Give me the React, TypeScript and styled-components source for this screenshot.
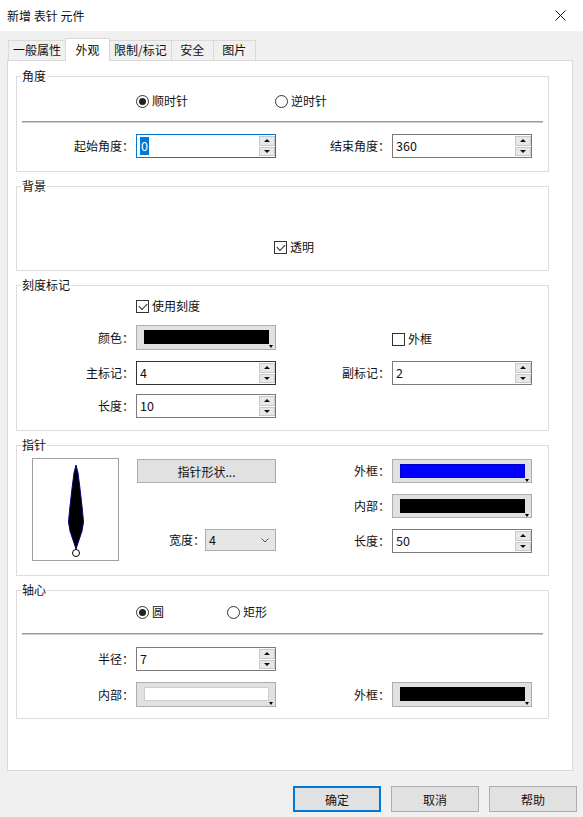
import styled, { createGlobalStyle } from 'styled-components';

const GlobalStyle = createGlobalStyle`
  html, body {
    margin: 0;
    padding: 0;
    background: #f0f0f0;
  }
  body {
    font-family: "Noto Sans CJK SC", "Microsoft YaHei", sans-serif;
    font-size: 12px;
    color: #111;
  }
  * {
    box-sizing: border-box;
  }
`;

const tabs = ['一般属性', '外观', '限制/标记', '安全', '图片'];

export default function App() {
  return (
    <Window>
      <GlobalStyle />
      <TitleBar>
        <Title>新增 表针 元件</Title>
        <CloseButton>
          <svg width="11" height="11" viewBox="0 0 11 11">
            <path d="M0.5 0.5 L10.5 10.5 M10.5 0.5 L0.5 10.5" stroke="#111" strokeWidth="1" />
          </svg>
        </CloseButton>
      </TitleBar>

      <Body>
        <TabStrip>
          {tabs.map((t, i) => (
            <Tab key={t} $active={i === 1}>
              {t}
            </Tab>
          ))}
        </TabStrip>

        <Panel>
          {/* 角度 */}
          <Group $h={104}>
            <Legend>角度</Legend>
            <GroupBody $pt={8}>
              <RadioRow>
                <RadioItem $w={139}>
                  <Radio $checked />
                  顺时针
                </RadioItem>
                <RadioItem>
                  <Radio />
                  逆时针
                </RadioItem>
              </RadioRow>
              <Etched $mt={11} />
              <FormRow $h={24} $mt={11}>
                <Label>起始角度：</Label>
                <SpinBox $tone="focus">
                  <SpinValue>
                    <Selected>0</Selected>
                  </SpinValue>
                  <Spinner />
                </SpinBox>
                <Label>结束角度：</Label>
                <SpinBox>
                  <SpinValue>360</SpinValue>
                  <Spinner />
                </SpinBox>
              </FormRow>
            </GroupBody>
          </Group>

          {/* 背景 */}
          <Group $h={93}>
            <Legend>背景</Legend>
            <GroupBody $pt={45}>
              <CheckRow $pl={257}>
                <CheckItem>
                  <CheckBox $checked />
                  透明
                </CheckItem>
              </CheckRow>
            </GroupBody>
          </Group>

          {/* 刻度标记 */}
          <Group $h={154}>
            <Legend>刻度标记</Legend>
            <GroupBody $pt={5}>
              <CheckRow $pl={119}>
                <CheckItem>
                  <CheckBox $checked />
                  使用刻度
                </CheckItem>
              </CheckRow>
              <FormRow $h={25} $mt={11}>
                <Label>颜色：</Label>
                <ColorButton color="#000" />
                <span />
                <CheckCell>
                  <CheckItem>
                    <CheckBox />
                    外框
                  </CheckItem>
                </CheckCell>
              </FormRow>
              <FormRow $h={24} $mt={11}>
                <Label>主标记：</Label>
                <SpinBox $tone="dark">
                  <SpinValue>4</SpinValue>
                  <Spinner />
                </SpinBox>
                <Label>副标记：</Label>
                <SpinBox>
                  <SpinValue>2</SpinValue>
                  <Spinner />
                </SpinBox>
              </FormRow>
              <FormRow $h={24} $mt={9}>
                <Label>长度：</Label>
                <SpinBox>
                  <SpinValue>10</SpinValue>
                  <Spinner />
                </SpinBox>
              </FormRow>
            </GroupBody>
          </Group>

          {/* 指针 */}
          <Group $h={139}>
            <Legend>指针</Legend>
            <GroupBody $pt={6}>
              <NeedleGrid>
                <Preview>
                  <svg width="85" height="101" viewBox="0 0 85 101">
                    <polygon
                      points="43,6 45,14 46.8,28 49.3,50 50.5,63 49,72 46,81 43,90 40,81 37,72 35.5,63 36.7,50 39.2,28 41,14"
                      fill="#000"
                      stroke="#000080"
                      strokeWidth="1"
                      strokeLinejoin="round"
                    />
                    <circle cx="43" cy="94" r="3.5" fill="#fff" stroke="#000" strokeWidth="1" />
                  </svg>
                </Preview>
                <PushButton $w={139}>指针形状...</PushButton>
                <Label>外框：</Label>
                <ColorButton color="#0000ff" />

                <span />
                <Label>内部：</Label>
                <ColorButton color="#000" />

                <WidthCell>
                  宽度：
                  <Combo>
                    4
                    <svg width="8" height="5" viewBox="0 0 8 5">
                      <path d="M0.5 0.5 L4 4 L7.5 0.5" fill="none" stroke="#555" strokeWidth="1" />
                    </svg>
                  </Combo>
                </WidthCell>
                <Label>长度：</Label>
                <SpinBox>
                  <SpinValue>50</SpinValue>
                  <Spinner />
                </SpinBox>
              </NeedleGrid>
            </GroupBody>
          </Group>

          {/* 轴心 */}
          <Group $h={137}>
            <Legend>轴心</Legend>
            <GroupBody $pt={5}>
              <RadioRow>
                <RadioItem $w={91}>
                  <Radio $checked />
                  圆
                </RadioItem>
                <RadioItem>
                  <Radio />
                  矩形
                </RadioItem>
              </RadioRow>
              <Etched $mt={12} />
              <FormRow $h={24} $mt={12}>
                <Label>半径：</Label>
                <SpinBox>
                  <SpinValue>7</SpinValue>
                  <Spinner />
                </SpinBox>
              </FormRow>
              <FormRow $h={25} $mt={11}>
                <Label>内部：</Label>
                <ColorButton color="#fff" />
                <Label>外框：</Label>
                <ColorButton color="#000" />
              </FormRow>
            </GroupBody>
          </Group>
        </Panel>

        <Footer>
          <PushButton $w={88} $h={26} $default>
            确定
          </PushButton>
          <PushButton $w={88} $h={26}>
            取消
          </PushButton>
          <PushButton $w={88} $h={26}>
            帮助
          </PushButton>
        </Footer>
      </Body>
    </Window>
  );
}

function Spinner() {
  return (
    <SpinButtons>
      <SpinButton>
        <Arrow $up />
      </SpinButton>
      <SpinButton>
        <Arrow />
      </SpinButton>
    </SpinButtons>
  );
}

function ColorButton({ color }: { color: string }) {
  return (
    <ColorFrame>
      <Swatch $color={color} />
      <DropMark />
    </ColorFrame>
  );
}

const Window = styled.div`
  width: 583px;
  height: 817px;
  background: #f0f0f0;
  display: flex;
  flex-direction: column;
  overflow: hidden;
`;

const TitleBar = styled.div`
  height: 31px;
  flex-shrink: 0;
  background: #fff;
  display: flex;
  align-items: center;
  justify-content: space-between;
  padding-left: 7px;
`;

const Title = styled.span`
  font-size: 12px;
  line-height: 16px;
  margin-top: 1px;
`;

const CloseButton = styled.div`
  width: 46px;
  height: 31px;
  display: flex;
  align-items: center;
  justify-content: center;
`;

const Body = styled.div`
  padding: 7px 0 0 7px;
  display: flex;
  flex-direction: column;
`;

const TabStrip = styled.div`
  height: 22px;
  display: flex;
  align-items: flex-end;
  padding-left: 2px;
`;

const Tab = styled.div<{ $active?: boolean }>`
  height: ${(p) => (p.$active ? 23 : 20)}px;
  min-width: ${(p) => (p.$active ? 45 : 43)}px;
  margin-left: -1px;
  margin-bottom: ${(p) => (p.$active ? -1 : 0)}px;
  padding: ${(p) => (p.$active ? '2px 4px 0' : '0 4px')};
  background: ${(p) => (p.$active ? '#fff' : '#f0f0f0')};
  border: 1px solid #d9d9d9;
  border-bottom: none;
  position: relative;
  z-index: ${(p) => (p.$active ? 2 : 1)};
  text-align: center;
  line-height: 18px;
  white-space: nowrap;
`;

const Panel = styled.div`
  width: 566px;
  height: 711px;
  background: #fff;
  border: 1px solid #d9d9d9;
  padding: 7px 0 0 8px;
  display: flex;
  flex-direction: column;
  gap: 6px;
`;

const Group = styled.fieldset<{ $h: number }>`
  margin: 0;
  padding: 0;
  min-width: 0;
  width: 533px;
  height: ${(p) => p.$h}px;
  border: 1px solid #dcdcdc;
`;

const Legend = styled.legend`
  margin-left: 4px;
  padding: 0 1px;
  font-size: 12px;
  line-height: 16px;
`;

const GroupBody = styled.div<{ $pt: number }>`
  padding-top: ${(p) => p.$pt}px;
  display: flex;
  flex-direction: column;
`;

const RadioRow = styled.div`
  height: 18px;
  display: flex;
  align-items: center;
  padding-left: 119px;
`;

const RadioItem = styled.label<{ $w?: number }>`
  display: flex;
  align-items: center;
  gap: 3px;
  width: ${(p) => (p.$w ? `${p.$w}px` : 'auto')};
  line-height: 16px;
`;

const Radio = styled.span<{ $checked?: boolean }>`
  width: 13px;
  height: 13px;
  border-radius: 50%;
  border: 1px solid #333;
  background: #fff;
  display: flex;
  align-items: center;
  justify-content: center;

  &::after {
    content: '';
    width: 7px;
    height: 7px;
    border-radius: 50%;
    background: #222;
    display: ${(p) => (p.$checked ? 'block' : 'none')};
  }
`;

const CheckRow = styled.div<{ $pl: number }>`
  height: 16px;
  display: flex;
  align-items: center;
  padding-left: ${(p) => p.$pl}px;
`;

const CheckCell = styled.div`
  display: flex;
  align-items: center;
  padding-top: 3px;
`;

const CheckItem = styled.label`
  display: flex;
  align-items: center;
  gap: 3px;
  line-height: 16px;
`;

const CheckBox = styled.span<{ $checked?: boolean }>`
  width: 13px;
  height: 13px;
  border: 1px solid #333;
  background: #fff;
  display: flex;
  align-items: center;
  justify-content: center;

  &::after {
    content: '';
    display: ${(p) => (p.$checked ? 'block' : 'none')};
    width: 7px;
    height: 4px;
    border-left: 1px solid #222;
    border-bottom: 1px solid #222;
    transform: translateY(-1px) rotate(-45deg);
  }
`;

const Etched = styled.div<{ $mt: number }>`
  margin: ${(p) => p.$mt}px 5px 0 5px;
  height: 2px;
  border-top: 1px solid #999;
  border-bottom: 1px solid #cfcfcf;
`;

const FormRow = styled.div<{ $h: number; $mt: number }>`
  display: grid;
  grid-template-columns: 117px 140px 112px 140px;
  column-gap: 2px;
  height: ${(p) => p.$h}px;
  margin-top: ${(p) => p.$mt}px;
`;

const NeedleGrid = styled.div`
  display: grid;
  grid-template-columns: 117px 140px 112px 140px;
  grid-template-rows: 24px 24px 24px;
  column-gap: 2px;
  row-gap: 11px;
`;

const Label = styled.div`
  display: flex;
  align-items: center;
  justify-content: flex-end;
  white-space: nowrap;
  line-height: 16px;
`;

const SpinBox = styled.div<{ $tone?: 'focus' | 'dark' }>`
  display: flex;
  background: #fff;
  border: 1px solid
    ${(p) => (p.$tone === 'focus' ? '#0078d7' : p.$tone === 'dark' ? '#333' : '#7a7a7a')};
  padding: 1px 0 1px 2px;
`;

const SpinValue = styled.div`
  flex: 1;
  display: flex;
  align-items: center;
  padding-left: 1px;
  line-height: 18px;
  font-size: 12.5px;
`;

const Selected = styled.span`
  background: #0078d7;
  color: #fff;
  padding: 0 1px;
`;

const SpinButtons = styled.div`
  width: 16px;
  display: flex;
  flex-direction: column;
  gap: 1px;
`;

const SpinButton = styled.div`
  flex: 1;
  background: #e8e8e8;
  border: 1px solid #c9c9c9;
  display: flex;
  align-items: center;
  justify-content: center;
`;

const Arrow = styled.span<{ $up?: boolean }>`
  width: 0;
  height: 0;
  border-left: 3px solid transparent;
  border-right: 3px solid transparent;
  ${(p) => (p.$up ? 'border-bottom: 3px solid #111;' : 'border-top: 3px solid #111;')}
`;

const ColorFrame = styled.div`
  display: flex;
  align-items: flex-start;
  background: #e1e1e1;
  border: 1px solid #adadad;
  padding: 4px 2px 0 7px;
`;

const Swatch = styled.div<{ $color: string }>`
  flex: 1;
  height: 14px;
  background: ${(p) => p.$color};
  border: 1px solid rgba(0, 0, 0, 0.2);
`;

const DropMark = styled.span`
  width: 0;
  height: 0;
  margin-top: 15px;
  border-left: 2.5px solid transparent;
  border-right: 2.5px solid transparent;
  border-top: 3px solid #000;
`;

const Preview = styled.div`
  grid-row: 1 / span 3;
  width: 87px;
  height: 103px;
  margin: -1px 0 0 15px;
  border: 1px solid #a0a0a0;
  background: #fff;
`;

const PushButton = styled.button<{ $w: number; $h?: number; $default?: boolean }>`
  width: ${(p) => p.$w}px;
  height: ${(p) => (p.$h ? `${p.$h}px` : '100%')};
  background: #e1e1e1;
  border: 1px solid ${(p) => (p.$default ? '#0078d7' : '#adadad')};
  box-shadow: ${(p) => (p.$default ? 'inset 0 0 0 1px #0078d7' : 'none')};
  font-family: inherit;
  font-size: 12px;
  color: #111;
  padding: 0;
  margin-left: ${(p) => (p.$h ? 0 : 1)}px;
`;

const WidthCell = styled.div`
  display: flex;
  align-items: flex-start;
  justify-content: flex-end;
  line-height: 22px;
  white-space: nowrap;
`;

const Combo = styled.div`
  width: 71px;
  height: 22px;
  background: #e5e5e5;
  border: 1px solid #adadad;
  display: flex;
  align-items: center;
  justify-content: space-between;
  padding: 0 6px 0 3px;
  font-size: 12.5px;
`;

const Footer = styled.div`
  margin-top: 15px;
  padding-right: 6px;
  display: flex;
  justify-content: flex-end;
  gap: 10px;
`;
